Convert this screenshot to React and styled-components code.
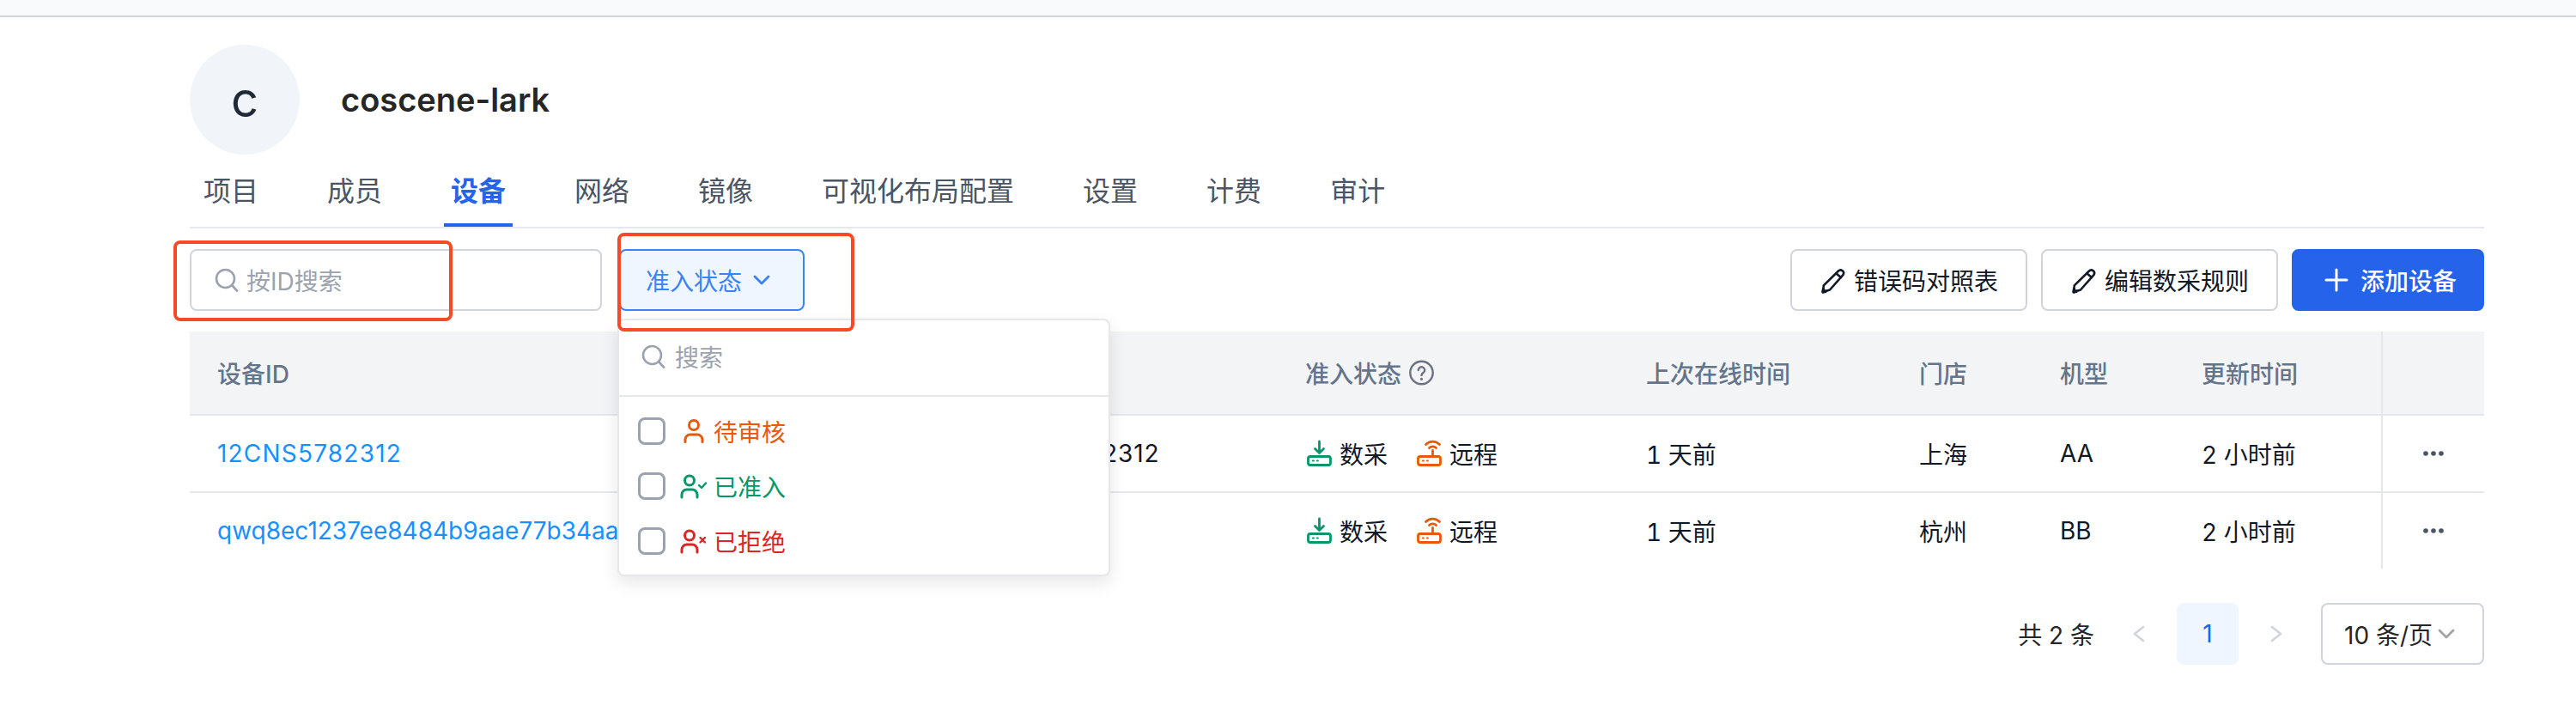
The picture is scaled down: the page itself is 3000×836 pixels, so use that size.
import React from 'react'
import styled, { createGlobalStyle } from 'styled-components'

const GRID = '886px 381px 397px 318px 164px 165px 241px 120px'
const GREEN = '#059669'
const ORANGE = '#ea580c'
const RED = '#dc2626'

const GlobalStyle = createGlobalStyle`
  html, body {
    margin: 0;
    padding: 0;
    background: #fff;
    overflow: hidden;
  }
  body {
    font-family: Inter, "Noto Sans CJK SC", sans-serif;
    font-size: 28px;
    color: #111827;
  }
  * { box-sizing: border-box; }
`

const Page = styled.div`
  width: 3000px;
  height: 836px;
`

const TopBar = styled.div`
  height: 20px;
  background: #f9fafb;
  border-bottom: 2px solid #d1d5db;
`

const Content = styled.main`
  padding: 32px 107px 0 221px;
`

const Header = styled.header`
  display: flex;
  align-items: center;
  gap: 48px;
`

const Avatar = styled.div`
  width: 128px;
  height: 128px;
  border-radius: 50%;
  background: #f1f5f9;
  color: #1f2937;
  font-size: 56px;
  display: flex;
  align-items: center;
  justify-content: center;
`

const Title = styled.h1`
  margin: 0;
  font-size: 38px;
  font-weight: 600;
  color: #262626;
`

const Tabs = styled.nav`
  display: flex;
  gap: 48px;
  border-bottom: 2px solid #e5e7eb;
`

const Tab = styled.a`
  position: relative;
  height: 84px;
  padding: 0 16px 4px;
  display: flex;
  align-items: center;
  font-size: 32px;
  font-weight: ${p => (p.$active ? 600 : 400)};
  color: ${p => (p.$active ? '#2563eb' : '#4b5563')};

  &::after {
    content: '';
    display: ${p => (p.$active ? 'block' : 'none')};
    position: absolute;
    left: 8px;
    right: 8px;
    bottom: 0;
    height: 4px;
    background: #2563eb;
  }
`

const Toolbar = styled.div`
  display: flex;
  justify-content: space-between;
  margin-top: 24px;
`

const ToolGroup = styled.div`
  display: flex;
  gap: ${p => p.$gap}px;
`

const SearchBox = styled.div`
  position: relative;
  width: 480px;
  height: 72px;
  padding-left: 27px;
  border: 2px solid #d1d5db;
  border-radius: 8px;
  display: flex;
  align-items: center;
  gap: 9px;
  color: #9ca3af;
`

const Filter = styled.div`
  position: relative;
`

const FilterButton = styled.button`
  width: 216px;
  height: 72px;
  padding: 0 0 0 29px;
  background: #eff6ff;
  border: 2px solid #3b82f6;
  border-radius: 8px;
  color: #3b82f6;
  font: inherit;
  display: flex;
  align-items: center;
  gap: 13px;
`

const Annotation = styled.div`
  position: absolute;
  z-index: 3;
  left: ${p => p.$left}px;
  top: ${p => p.$top}px;
  width: ${p => p.$width}px;
  height: ${p => p.$height}px;
  border: 4px solid #f54a25;
  border-radius: 8px;
  pointer-events: none;
`

const Dropdown = styled.div`
  position: absolute;
  z-index: 2;
  left: -2px;
  top: 81px;
  width: 574px;
  background: #fff;
  border: 2px solid #e5e7eb;
  border-radius: 8px;
  box-shadow: 0 8px 20px rgba(17, 24, 39, 0.1);
`

const DropdownSearch = styled.div`
  height: 89px;
  padding: 0 0 3px 26px;
  border-bottom: 2px solid #e5e7eb;
  display: flex;
  align-items: center;
  gap: 11px;
  color: #9ca3af;
`

const OptionList = styled.ul`
  list-style: none;
  margin: 0;
  padding: 24px 0 23px 22px;
  display: flex;
  flex-direction: column;
  gap: 32px;
`

const Option = styled.li`
  height: 32px;
  display: flex;
  align-items: center;
  color: ${p => p.$color};
`

const Checkbox = styled.span`
  width: 32px;
  height: 32px;
  margin-right: 16px;
  background: #fff;
  border: 3px solid #9ca3af;
  border-radius: 8px;
`

const OptionLabel = styled.span`
  margin-left: 8px;
`

const Button = styled.button`
  width: ${p => (p.$primary ? 224 : 276)}px;
  height: 72px;
  padding: 0;
  background: ${p => (p.$primary ? '#2563eb' : '#fff')};
  border: 2px solid ${p => (p.$primary ? '#2563eb' : '#d1d5db')};
  border-radius: 8px;
  color: ${p => (p.$primary ? '#fff' : '#111827')};
  font: inherit;
  font-weight: ${p => (p.$primary ? 500 : 400)};
  display: flex;
  align-items: center;
  justify-content: center;
  gap: 8px;
`

const Table = styled.section`
  margin-top: 24px;
`

const HeadRow = styled.div`
  display: grid;
  grid-template-columns: ${GRID};
  height: 98px;
  background: #f3f4f6;
  border-bottom: 2px solid #e5e7eb;
  color: #64748b;
  font-weight: 500;
`

const Row = styled.div`
  display: grid;
  grid-template-columns: ${GRID};
  height: ${p => (p.$last ? 88 : 90)}px;
  border-bottom: ${p => (p.$last ? 'none' : '2px solid #e5e7eb')};
`

const Cell = styled.div`
  padding-left: 32px;
  display: flex;
  align-items: center;
  white-space: nowrap;
  min-width: 0;
  gap: 8px;
  font-variant-numeric: ${p => (p.$tabular ? 'tabular-nums' : 'normal')};
`

const ActionCell = styled.div`
  border-left: 2px solid #e5e7eb;
  display: flex;
  align-items: center;
  justify-content: center;
`

const DeviceLink = styled.a`
  color: #1890ff;
  letter-spacing: ${p => p.$spacing || 0}px;
`

const SerialText = styled.span`
  letter-spacing: 0.9px;
`

const Capability = styled.span`
  display: flex;
  align-items: center;
  gap: 8px;
  margin-right: 24px;
`

const Pagination = styled.footer`
  margin-top: 40px;
  display: flex;
  justify-content: flex-end;
  align-items: center;
  gap: 16px;
  color: #262626;
`

const Pager = styled.div`
  display: flex;
  gap: 8px;
`

const PageItem = styled.div`
  width: 72px;
  height: 72px;
  border-radius: 8px;
  display: flex;
  align-items: center;
  justify-content: center;
  background: ${p => (p.$active ? '#eff6ff' : 'transparent')};
  color: #2563eb;
`

const PageSize = styled.div`
  width: 190px;
  height: 72px;
  padding-left: 25px;
  border: 2px solid #d1d5db;
  border-radius: 8px;
  display: flex;
  align-items: center;
  gap: 6px;
  white-space: nowrap;
`

const Glyph = styled.svg`
  flex: none;
  fill: none;
  stroke: currentColor;
  stroke-linecap: round;
  stroke-linejoin: round;
`

const SearchIcon = () => (
  <Glyph width="28" height="28" viewBox="0 0 28 28" strokeWidth="2.6">
    <circle cx="12.5" cy="12.5" r="10.5" />
    <path d="M20.5 20.5 26 26.5" />
  </Glyph>
)

const ChevronDown = ({ width = 20, color }) => (
  <Glyph width={width} height="12" viewBox="0 0 20 12" strokeWidth="2.8" style={{ color }}>
    <path d="M2 2l8 8 8-8" />
  </Glyph>
)

const PencilIcon = () => (
  <Glyph width="32" height="32" viewBox="0 0 32 32" strokeWidth="2.6">
    <path d="M22 5.5a3.6 3.6 0 0 1 5.6 4.4L12 27.5 4 30l.8-7.6z" />
    <path d="M19.5 8.5l5.5 4.5" />
    <path d="M4.5 26.5 4 30l3.5-1" strokeWidth="3.4" />
  </Glyph>
)

const PlusIcon = () => (
  <Glyph width="40" height="40" viewBox="0 0 40 40" strokeWidth="3">
    <path d="M20 8v24M8 20h24" />
  </Glyph>
)

const HelpIcon = () => (
  <Glyph width="30" height="30" viewBox="0 0 30 30" strokeWidth="2.4" style={{ color: '#6b7280' }}>
    <circle cx="15.5" cy="15" r="13.2" />
    <path d="M11.8 12a3.7 3.7 0 1 1 5.7 3.1c-1.2.8-2 1.5-2 2.9" />
    <path d="M15.5 22.2v.2" strokeWidth="3" />
  </Glyph>
)

const PersonIcon = () => (
  <Glyph width="32" height="32" viewBox="0 0 32 32" strokeWidth="3">
    <circle cx="17" cy="9" r="5.5" />
    <path d="M7 28.5V26a6 6 0 0 1 6-6h8a6 6 0 0 1 6 6v2.5" />
  </Glyph>
)

const PersonBadgeIcon = ({ kind }) => (
  <Glyph width="32" height="32" viewBox="0 0 32 32" strokeWidth="3">
    <circle cx="12" cy="9.5" r="5.5" />
    <path d="M3 29v-3a6 6 0 0 1 6-6h6a6 6 0 0 1 6 6v3" />
    {kind === 'check' && <path d="M23 15l3 3 5-5.5" strokeWidth="2.4" />}
    {kind === 'cross' && <path d="M24.5 12l5.5 5.5M30 12l-5.5 5.5" strokeWidth="2.4" />}
  </Glyph>
)

const DeviceBox = () => (
  <>
    <rect x="3.5" y="19.5" width="26" height="10" rx="2.5" />
    <path d="M9 24.5h.8M14 24.5h.8" strokeWidth="2.2" />
  </>
)

const CollectIcon = () => (
  <Glyph width="32" height="32" viewBox="0 0 32 32" strokeWidth="2.8" style={{ color: GREEN }}>
    <DeviceBox />
    <path d="M16.5 2v13M11.5 10.5l5 5 5-5" />
  </Glyph>
)

const RemoteIcon = () => (
  <Glyph width="32" height="32" viewBox="0 0 32 32" strokeWidth="2.8" style={{ color: ORANGE }}>
    <DeviceBox />
    <path d="M20.5 12.5v7M12.5 5.5a11 11 0 0 1 16 0M16.5 9.5a6 6 0 0 1 8 0" />
  </Glyph>
)

const DotsIcon = () => (
  <svg width="24" height="6" viewBox="0 0 24 6" fill="#4b5563">
    <circle cx="3" cy="3" r="2.8" />
    <circle cx="12" cy="3" r="2.8" />
    <circle cx="21" cy="3" r="2.8" />
  </svg>
)

const PageArrow = ({ dir }) => (
  <Glyph width="14" height="20" viewBox="0 0 14 20" strokeWidth="2.8" style={{ color: '#d1d5db' }}>
    <path d={dir === 'left' ? 'M12 2 2 10l10 8' : 'M2 2l10 8-10 8'} />
  </Glyph>
)

const tabs = ['项目', '成员', '设备', '网络', '镜像', '可视化布局配置', '设置', '计费', '审计']

const columns = ['设备ID', '', '准入状态', '上次在线时间', '门店', '机型', '更新时间']

const devices = [
  { id: '12CNS5782312', spacing: 1.2, sn: '12CNS5782312', online: '1 天前', store: '上海', model: 'AA', updated: '2 小时前' },
  { id: 'qwq8ec1237ee8484b9aae77b34aae', spacing: 0, sn: '', online: '1 天前', store: '杭州', model: 'BB', updated: '2 小时前' },
]

function App() {
  return (
    <Page>
      <GlobalStyle />
      <TopBar />
      <Content>
        <Header>
          <Avatar>c</Avatar>
          <Title>coscene-lark</Title>
        </Header>

        <Tabs>
          {tabs.map(t => (
            <Tab key={t} $active={t === '设备'}>{t}</Tab>
          ))}
        </Tabs>

        <Toolbar>
          <ToolGroup $gap={20}>
            <SearchBox>
              <SearchIcon />
              <span>按ID搜索</span>
              <Annotation $left={-21} $top={-12} $width={325} $height={94} />
            </SearchBox>
            <Filter>
              <FilterButton>
                准入状态
                <ChevronDown />
              </FilterButton>
              <Annotation $left={-2} $top={-19} $width={276} $height={115} />
              <Dropdown>
                <DropdownSearch>
                  <SearchIcon />
                  <span>搜索</span>
                </DropdownSearch>
                <OptionList>
                  <Option $color={ORANGE}>
                    <Checkbox />
                    <PersonIcon />
                    <OptionLabel>待审核</OptionLabel>
                  </Option>
                  <Option $color={GREEN}>
                    <Checkbox />
                    <PersonBadgeIcon kind="check" />
                    <OptionLabel>已准入</OptionLabel>
                  </Option>
                  <Option $color={RED}>
                    <Checkbox />
                    <PersonBadgeIcon kind="cross" />
                    <OptionLabel>已拒绝</OptionLabel>
                  </Option>
                </OptionList>
              </Dropdown>
            </Filter>
          </ToolGroup>
          <ToolGroup $gap={16}>
            <Button><PencilIcon />错误码对照表</Button>
            <Button><PencilIcon />编辑数采规则</Button>
            <Button $primary><PlusIcon />添加设备</Button>
          </ToolGroup>
        </Toolbar>

        <Table>
          <HeadRow>
            {columns.map((c, i) => (
              <Cell key={i}>
                {c}
                {c === '准入状态' && <HelpIcon />}
              </Cell>
            ))}
            <ActionCell />
          </HeadRow>
          {devices.map((d, i) => (
            <Row key={d.id} $last={i === devices.length - 1}>
              <Cell><DeviceLink $spacing={d.spacing}>{d.id}</DeviceLink></Cell>
              <Cell><SerialText>{d.sn}</SerialText></Cell>
              <Cell>
                <Capability><CollectIcon />数采</Capability>
                <Capability><RemoteIcon />远程</Capability>
              </Cell>
              <Cell $tabular>{d.online}</Cell>
              <Cell>{d.store}</Cell>
              <Cell>{d.model}</Cell>
              <Cell $tabular>{d.updated}</Cell>
              <ActionCell><DotsIcon /></ActionCell>
            </Row>
          ))}
        </Table>

        <Pagination>
          <span>共 2 条</span>
          <Pager>
            <PageItem><PageArrow dir="left" /></PageItem>
            <PageItem $active>1</PageItem>
            <PageItem><PageArrow dir="right" /></PageItem>
          </Pager>
          <PageSize>
            10 条/页
            <ChevronDown color="#a3a3a3" />
          </PageSize>
        </Pagination>
      </Content>
    </Page>
  )
}

export default App
